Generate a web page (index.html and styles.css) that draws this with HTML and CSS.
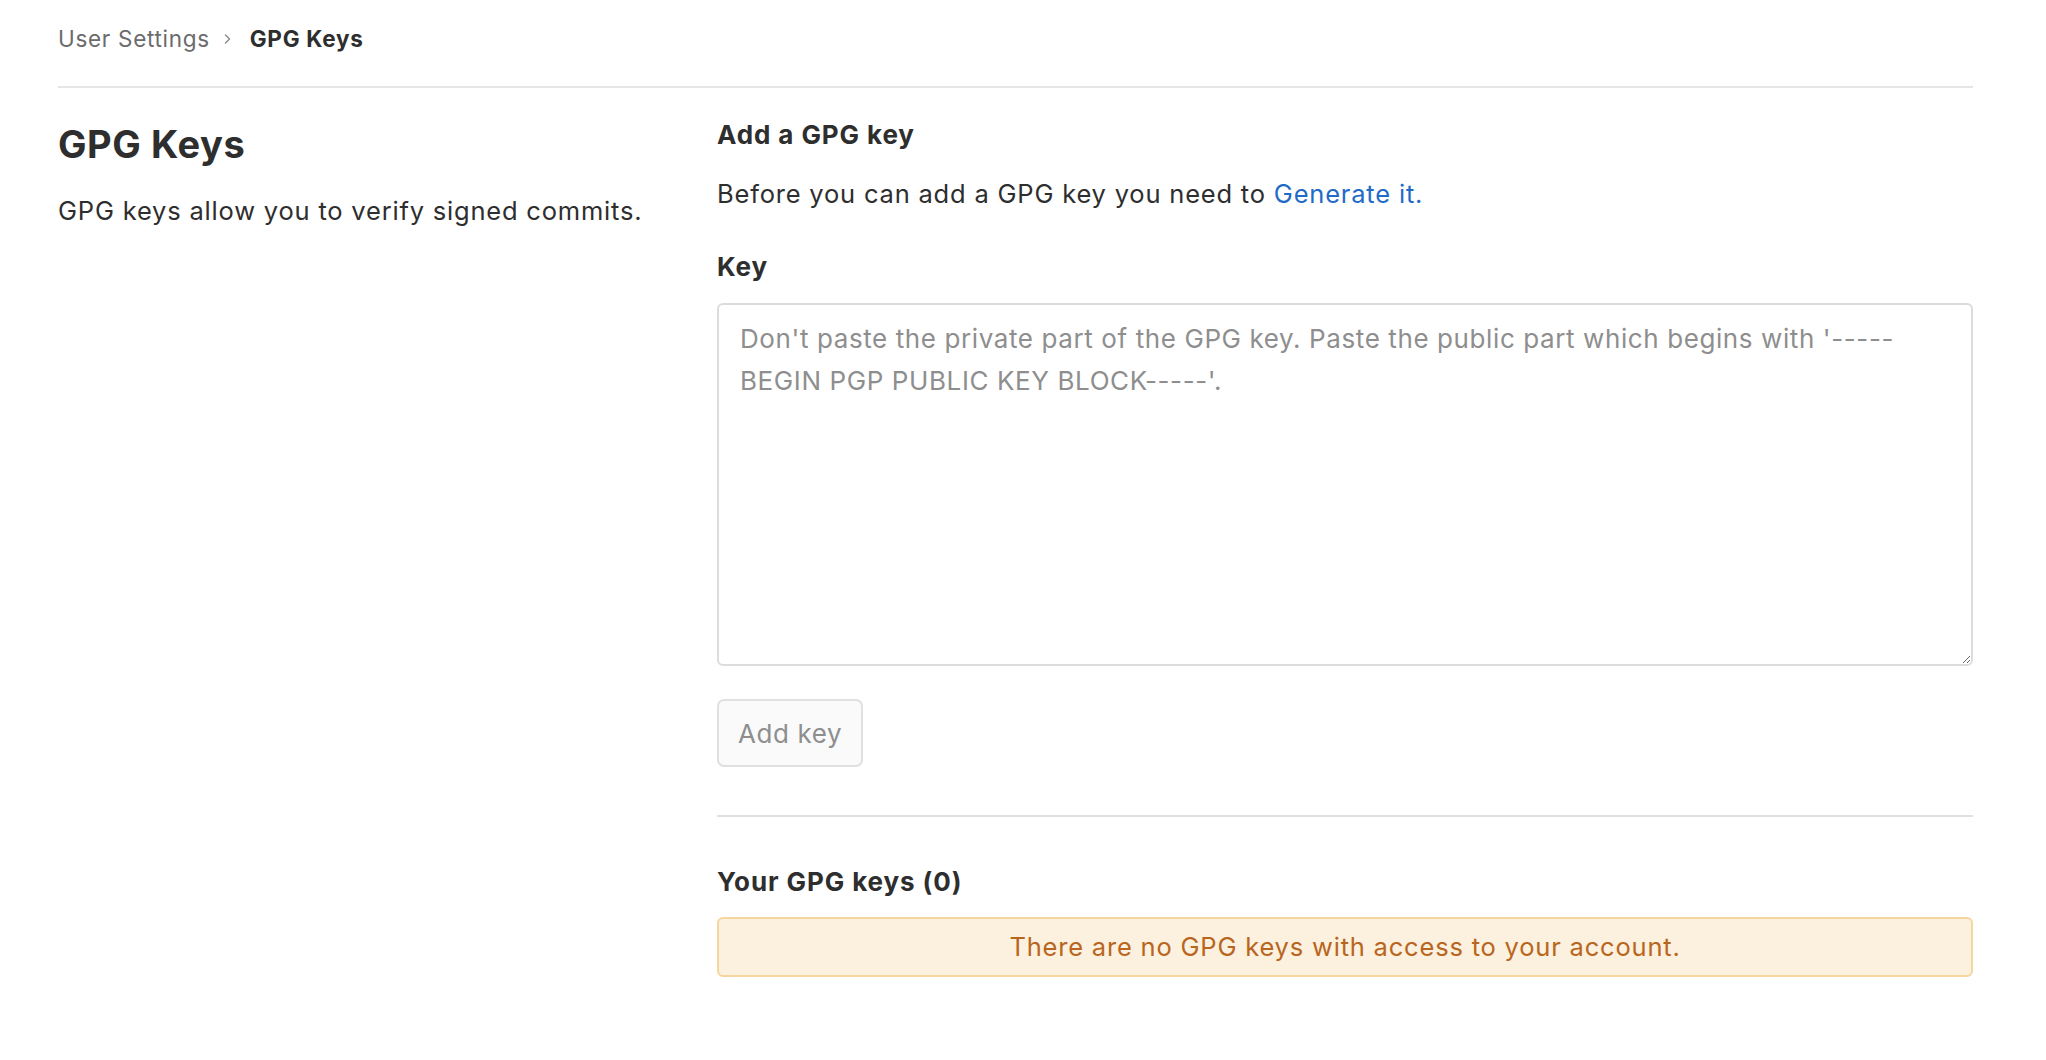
FILE: index.html
```html
<!DOCTYPE html>
<html lang="en">
<head>
<meta charset="utf-8">
<title>GPG Keys · User Settings</title>
<link rel="stylesheet" href="styles.css">
</head>
<body>
<div class="page">
  <nav class="breadcrumbs">
    <a class="crumb" href="#">User Settings</a>
    <svg class="chev" width="9" height="14" viewBox="0 0 9 14"><path d="M2.5 3 6.5 7 2.5 11" fill="none" stroke="#8c8c8c" stroke-width="1.5" stroke-linecap="round" stroke-linejoin="round"/></svg>
    <span class="crumb current">GPG Keys</span>
  </nav>
  <div class="settings-row">
    <section class="intro">
      <h2 class="page-title">GPG Keys</h2>
      <p class="intro-text">GPG keys allow you to verify signed commits.</p>
    </section>
    <section class="main">
      <h4 class="sub-title">Add a GPG key</h4>
      <p class="lead">Before you can add a GPG key you need to <a class="link" href="#">Generate it.</a></p>
      <label class="field-label" for="key">Key</label>
      <textarea id="key" class="key-input" placeholder="Don't paste the private part of the GPG key. Paste the public part which begins with '-----&#10;BEGIN PGP PUBLIC KEY BLOCK-----'."></textarea>
      <button class="btn-add" type="button" disabled>Add key</button>
      <hr class="sep">
      <h4 class="sub-title list-title">Your GPG keys (0)</h4>
      <div class="alert-empty">There are no GPG keys with access to your account.</div>
    </section>
  </div>
</div>
</body>
</html>
```
FILE: styles.css
```css
html, body {
  margin: 0;
  padding: 0;
  background: #ffffff;
}
body {
  font-family: Inter, "Noto Sans", "Liberation Sans", sans-serif;
  color: #2e2e2e;
}
.page {
  padding: 0 73px 0 58px;
}
.breadcrumbs {
  display: flex;
  align-items: center;
  gap: 13px;
  padding: 24px 0 32px;
  height: 30px;
  border-bottom: 2px solid #e5e5e5;
  font-size: 22.5px;
  line-height: 30px;
  letter-spacing: 0.7px;
}
.crumb {
  color: #6b6b6b;
  text-decoration: none;
}
.crumb.current {
  color: #2e2e2e;
  font-weight: 700;
  margin-left: 5px;
}
.chev {
  display: block;
}
.settings-row {
  display: grid;
  grid-template-columns: 659px 1fr;
}
.page-title {
  margin: 36px 0 0;
  font-size: 38px;
  line-height: 40px;
  font-weight: 700;
  letter-spacing: 0.6px;
  color: #2e2e2e;
}
.intro-text {
  margin: 31px 0 0;
  font-size: 25.5px;
  line-height: 32px;
  letter-spacing: 0.8px;
  color: #2e2e2e;
}
.main {
  display: flex;
  flex-direction: column;
  align-items: flex-start;
}
.sub-title {
  margin: 32px 0 0;
  font-size: 26px;
  line-height: 30px;
  font-weight: 700;
  letter-spacing: 0.9px;
  color: #2e2e2e;
}
.lead {
  margin: 28px 0 0;
  font-size: 25.5px;
  line-height: 32px;
  letter-spacing: 0.8px;
  color: #2e2e2e;
}
.link {
  color: #1f6bc6;
  text-decoration: none;
}
.field-label {
  margin-top: 42px;
  font-size: 26px;
  line-height: 30px;
  font-weight: 700;
  letter-spacing: 0.9px;
}
.key-input {
  box-sizing: border-box;
  margin-top: 21px;
  width: 100%;
  height: 363px;
  padding: 13px 21px;
  border: 2px solid #dcdcdc;
  border-radius: 6px;
  font-family: inherit;
  font-size: 26px;
  line-height: 42px;
  letter-spacing: 0.6px;
  color: #2e2e2e;
  resize: vertical;
  outline: none;
}
.key-input::placeholder {
  color: #8e8e8e;
}
.btn-add {
  box-sizing: border-box;
  margin-top: 33px;
  height: 68px;
  padding: 0 19px;
  background: #fafafa;
  border: 2px solid #e0e0e0;
  border-radius: 7px;
  font-family: inherit;
  font-size: 26px;
  letter-spacing: 0.6px;
  color: #8e8e8e;
}
.sep {
  align-self: stretch;
  margin: 48px 0 0;
  border: 0;
  border-top: 2px solid #e0e0e0;
  height: 0;
}
.list-title {
  margin-top: 50px;
}
.alert-empty {
  box-sizing: border-box;
  align-self: stretch;
  margin-top: 20px;
  height: 60px;
  border: 2px solid #f7d59f;
  border-radius: 6px;
  background: #fcf0de;
  color: #b8661e;
  font-size: 25.5px;
  line-height: 56px;
  letter-spacing: 0.8px;
  text-align: center;
}
```
